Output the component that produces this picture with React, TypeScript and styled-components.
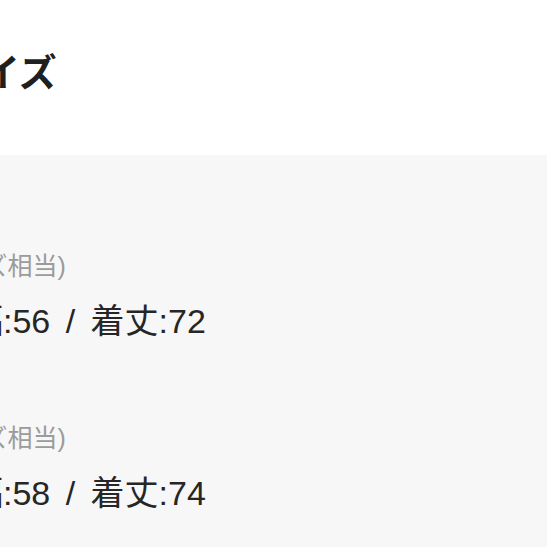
import * as React from 'react';
import styled, { createGlobalStyle } from 'styled-components';

const GlobalStyle = createGlobalStyle`
  html, body {
    margin: 0;
    padding: 0;
    background: #fff;
    overflow: hidden;
  }
  body {
    font-family: "Liberation Sans", "Noto Sans CJK JP", sans-serif;
    color: #222;
  }
`;

const Page = styled.div`
  width: 547px;
  height: 547px;
  display: flex;
  flex-direction: column;
`;

// the screenshot is cropped on the left, so the content starts off-screen
const Header = styled.header`
  height: 155px;
  box-sizing: border-box;
  padding-top: 48px;
  margin-left: -56px;
`;

const Title = styled.h2`
  margin: 0;
  font-size: 38px;
  line-height: 50px;
  font-weight: bold;
  color: #1f1f1f;
  white-space: nowrap;
`;

const Panel = styled.section`
  flex: 1;
  background: #f7f7f7;
  padding-top: 18px;
`;

const SizeList = styled.ul`
  list-style: none;
  margin: 0 0 0 -96px;
  padding: 0;
`;

const SizeItem = styled.li`
  padding-top: 77px;
`;

const Note = styled.div`
  font-size: 25px;
  line-height: 32px;
  color: #9b9b9b;
  white-space: nowrap;
`;

const Measure = styled.div`
  margin-top: 15px;
  padding-left: 31px;
  font-size: 34px;
  line-height: 48px;
  word-spacing: 6px;
  color: #262626;
  white-space: nowrap;
`;

const sizes = [
  { label: 'M', width: 56, length: 72 },
  { label: 'L', width: 58, length: 74 },
];

export default function App() {
  return (
    <Page>
      <GlobalStyle />
      <Header>
        <Title>サイズ</Title>
      </Header>
      <Panel>
        <SizeList>
          {sizes.map((s) => (
            <SizeItem key={s.label}>
              <Note>(Mサイズ相当)</Note>
              <Measure>身幅:{s.width} / 着丈:{s.length}</Measure>
            </SizeItem>
          ))}
        </SizeList>
      </Panel>
    </Page>
  );
}
